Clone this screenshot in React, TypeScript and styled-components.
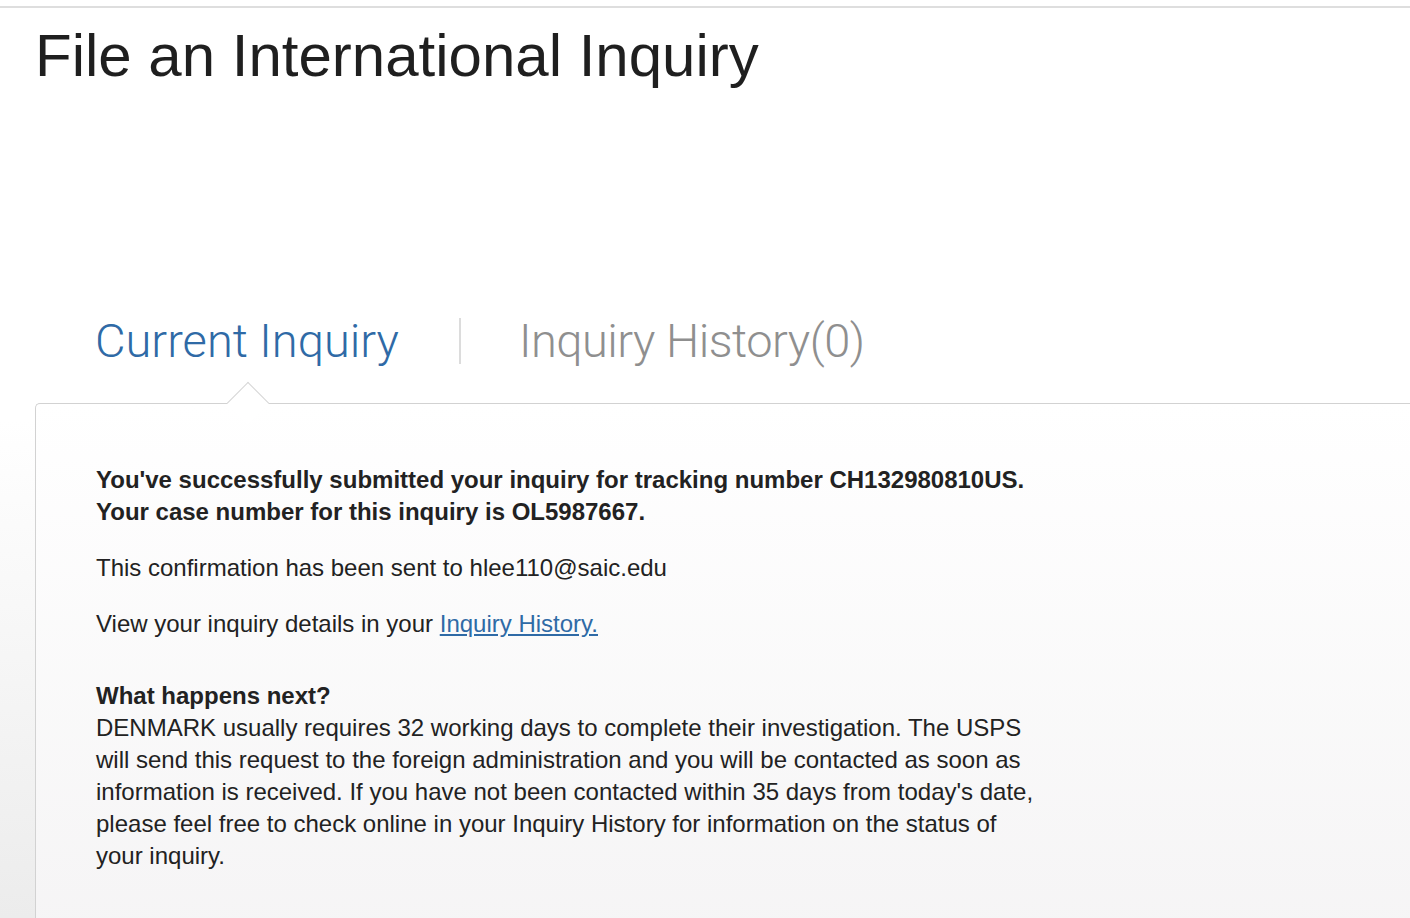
import React from "react";
import styled, { createGlobalStyle } from "styled-components";

const GlobalStyle = createGlobalStyle`
  html, body { margin: 0; padding: 0; }
  body {
    font-family: "Liberation Sans", Arial, Helvetica, sans-serif;
    color: #222;
    background: #fff;
  }
`;

const Page = styled.div`
  min-height: 100vh;
  overflow: hidden;
  background: linear-gradient(to bottom, #fff 0px, #fff 420px, #ececec 918px);
`;

const TopRule = styled.div`
  height: 2px;
  margin-top: 6px;
  background: #dedede;
`;

const Title = styled.h1`
  margin: 13px 0 0 35px;
  font-size: 60px;
  line-height: 70px;
  font-weight: 400;
  color: #1f1f1f;
  letter-spacing: 0;
`;

const Tabs = styled.div`
  display: flex;
  align-items: center;
  margin-top: 222px;
  padding-left: 95px;
  height: 56px;
`;

const Tab = styled.div<{ $active?: boolean }>`
  font-family: Roboto, "Liberation Sans", sans-serif;
  font-weight: 300;
  font-size: 47px;
  line-height: 56px;
  letter-spacing: ${(p) => (p.$active ? "0" : "-0.5px")};
  color: ${(p) => (p.$active ? "#2f6aa6" : "#8f8f8f")};
`;

const Divider = styled.div`
  width: 2px;
  height: 46px;
  background: #dcdcdc;
  margin: 0 58px 0 60px;
`;

const Box = styled.div`
  position: relative;
  margin: 34px 0 0 35px;
  border: 1px solid #d2d2d2;
  border-right: none;
  border-bottom: none;
  border-radius: 5px 0 0 0;
  padding: 60px 60px 80px 60px;
  background: linear-gradient(to bottom, #ffffff 0%, #f4f3f4 100%);
  min-height: 460px;

  &::before {
    content: "";
    position: absolute;
    top: -16px;
    left: 197px;
    width: 29px;
    height: 29px;
    background: #fff;
    border-left: 1px solid #d6d6d6;
    border-top: 1px solid #d6d6d6;
    transform: rotate(45deg);
  }
`;

const Content = styled.div`
  width: 945px;
  font-size: 24px;
  line-height: 32px;
  color: #222;
`;

const Para = styled.p<{ $gap?: number }>`
  margin: ${(p) => p.$gap ?? 24}px 0 0 0;
  &:first-child { margin-top: 0; }
`;

const Strong = styled.p`
  margin: 0;
  font-weight: 700;
`;

const Heading = styled.div`
  font-weight: 700;
  margin-top: 40px;
`;

const Link = styled.a`
  color: #2f6aa6;
  text-decoration: underline;
`;

export default function App() {
  return (
    <Page>
      <GlobalStyle />
      <TopRule />
      <Title>File an International Inquiry</Title>
      <Tabs>
        <Tab $active>Current Inquiry</Tab>
        <Divider />
        <Tab>Inquiry History(0)</Tab>
      </Tabs>
      <Box>
        <Content>
          <Strong>
            You've successfully submitted your inquiry for tracking number CH132980810US.
            <br />
            Your case number for this inquiry is OL5987667.
          </Strong>
          <Para>This confirmation has been sent to hlee110@saic.edu</Para>
          <Para>
            View your inquiry details in your <Link href="#">Inquiry History.</Link>
          </Para>
          <Heading>What happens next?</Heading>
          <Para $gap={0}>
            DENMARK usually requires 32 working days to complete their investigation. The USPS
            will send this request to the foreign administration and you will be contacted as soon as
            information is received. If you have not been contacted within 35 days from today's date,
            please feel free to check online in your Inquiry History for information on the status of
            your inquiry.
          </Para>
        </Content>
      </Box>
    </Page>
  );
}
